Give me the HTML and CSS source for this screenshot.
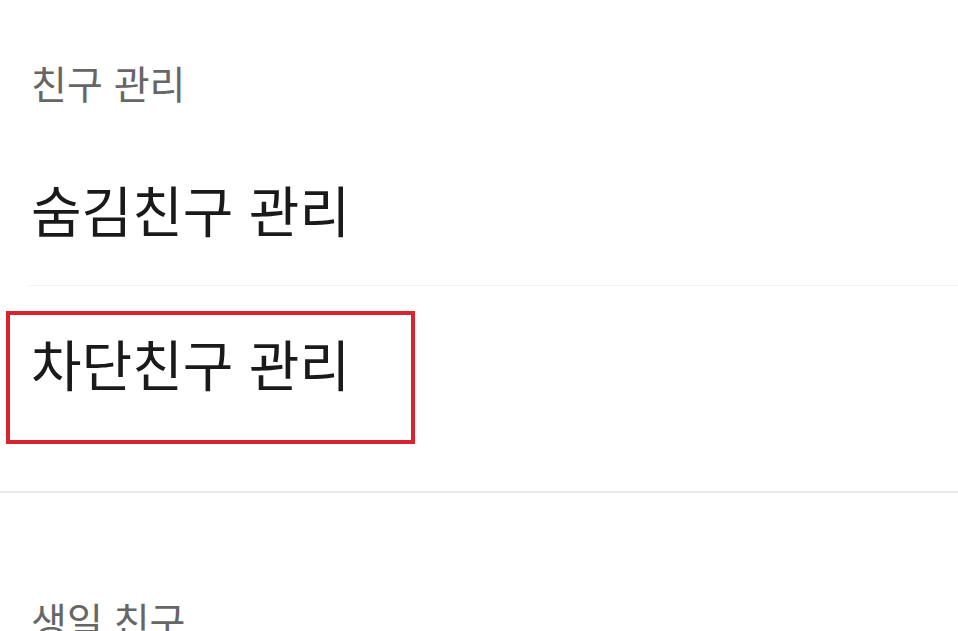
FILE: index.html
```html
<!DOCTYPE html>
<html lang="ko">
<head>
<meta charset="UTF-8" />
<meta name="viewport" content="width=device-width, initial-scale=1" />
<title>친구 관리</title>
<link rel="stylesheet" href="styles.css">
</head>
<body>

<section class="group">
  <h2 class="group-title">친구 관리</h2>
  <ul class="menu">
    <li class="menu-item">숨김친구 관리</li>
    <li class="menu-item highlighted">
      차단친구 관리
      <span class="mark"></span>
    </li>
  </ul>
</section>

<section class="group second">
  <h2 class="group-title">생일 친구</h2>
</section>

</body>
</html>
```

FILE: styles.css
```css
body {
  margin: 0;
  background: #fff;
  font-family: "Noto Sans CJK KR", "Noto Sans", sans-serif;
  color: #1a1a1a;
  overflow: hidden;
  height: 631px;
}
.group { border-bottom: 2px solid #ebebeb; padding-bottom: 45px; }
.group.second { border-bottom: none; padding-top: 44px; padding-bottom: 0; }
.group-title {
  margin: 0; font-weight: normal; font-size: 39px; line-height: 44px;
  color: #666; padding: 60px 0 0 31px; height: 71px;
}
.menu { list-style: none; margin: 0; padding: 0; }
.menu-item {
  position: relative; margin-left: 28px; padding-left: 3px;
  font-size: 55px; height: 154px; display: flex; align-items: center;
  border-bottom: 1px solid #f2f2f2;
}
.menu-item:last-child { border-bottom: none; height: 160px; padding-bottom: 8px; box-sizing: border-box; }
.mark {
  position: absolute; left: -22px; top: 25px; width: 401px; height: 125px;
  border: 4px solid #d9232d;
}
```
